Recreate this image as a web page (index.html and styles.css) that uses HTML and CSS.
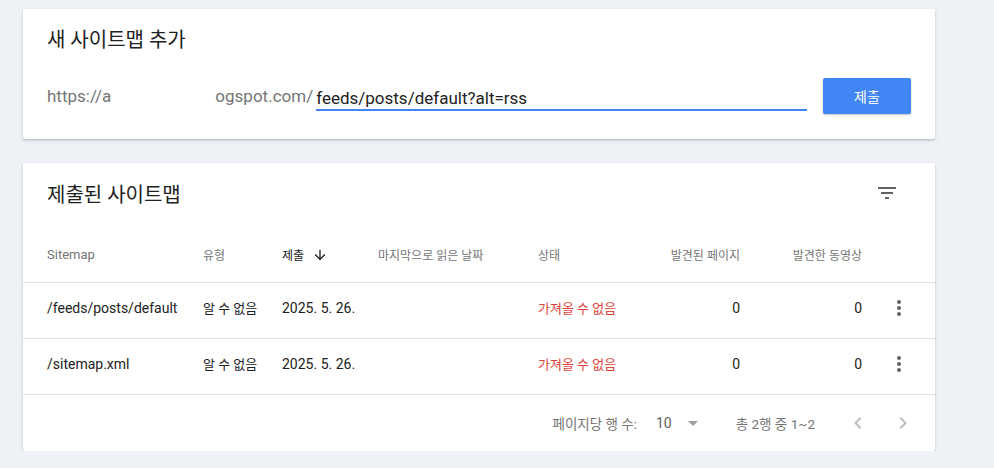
FILE: index.html
```html
<!DOCTYPE html>
<html lang="ko">
<head>
  <meta charset="UTF-8" />
  <title>Sitemaps</title>
  <link rel="stylesheet" href="styles.css">
</head>
<body>
  <div class="card add-card">
    <h2 class="card-title">새 사이트맵 추가</h2>
    <div class="add-row">
      <span class="prefix">https://a</span>
      <span class="prefix-gap"></span>
      <span class="prefix">ogspot.com/</span>
      <div class="url-field">feeds/posts/default?alt=rss</div>
      <button class="submit-btn">제출</button>
    </div>
  </div>

  <div class="card list-card">
    <div class="list-head">
      <h2 class="card-title">제출된 사이트맵</h2>
      <svg class="icon filter-icon" viewBox="0 0 24 24"><path d="M10 18h4v-2h-4v2zM3 6v2h18V6H3zm3 7h12v-2H6v2z"/></svg>
    </div>

    <div class="row header-row">
      <div class="latin">Sitemap</div>
      <div>유형</div>
      <div class="sorted">제출
        <svg class="sort-icon" viewBox="0 0 24 24"><path d="M20 12l-1.41-1.41L13 16.17V4h-2v12.17l-5.58-5.59L4 12l8 8 8-8z"/></svg>
      </div>
      <div>마지막으로 읽은 날짜</div>
      <div>상태</div>
      <div class="num">발견된 페이지</div>
      <div class="num">발견한 동영상</div>
      <div></div>
    </div>

    <div class="row data-row">
      <div class="latin">/feeds/posts/default</div>
      <div>알 수 없음</div>
      <div class="latin">2025. 5. 26.</div>
      <div></div>
      <div class="error">가져올 수 없음</div>
      <div class="num latin">0</div>
      <div class="num latin">0</div>
      <div class="more"><svg class="icon" viewBox="0 0 24 24"><path d="M12 8c1.1 0 2-.9 2-2s-.9-2-2-2-2 .9-2 2 .9 2 2 2zm0 2c-1.1 0-2 .9-2 2s.9 2 2 2 2-.9 2-2-.9-2-2-2zm0 6c-1.1 0-2 .9-2 2s.9 2 2 2 2-.9 2-2-.9-2-2-2z"/></svg></div>
    </div>

    <div class="row data-row">
      <div class="latin">/sitemap.xml</div>
      <div>알 수 없음</div>
      <div class="latin">2025. 5. 26.</div>
      <div></div>
      <div class="error">가져올 수 없음</div>
      <div class="num latin">0</div>
      <div class="num latin">0</div>
      <div class="more"><svg class="icon" viewBox="0 0 24 24"><path d="M12 8c1.1 0 2-.9 2-2s-.9-2-2-2-2 .9-2 2 .9 2 2 2zm0 2c-1.1 0-2 .9-2 2s.9 2 2 2 2-.9 2-2-.9-2-2-2zm0 6c-1.1 0-2 .9-2 2s.9 2 2 2 2-.9 2-2-.9-2-2-2z"/></svg></div>
    </div>

    <div class="pager">
      <span class="pager-label">페이지당 행 수:</span>
      <span class="page-size">10</span>
      <svg class="drop-icon" viewBox="0 0 24 24"><path d="M7 10l5 5 5-5z"/></svg>
      <span class="pager-range">총 2행 중 1~2</span>
      <svg class="chev chev-prev" viewBox="0 0 24 24"><path d="M15.41 7.41L14 6l-6 6 6 6 1.41-1.41L10.83 12z"/></svg>
      <svg class="chev" viewBox="0 0 24 24"><path d="M8.59 16.59L10 18l6-6-6-6-1.41 1.41L13.17 12z"/></svg>
    </div>
  </div>
</body>
</html>
```

FILE: styles.css
```css
body {
  margin: 0;
  padding: 9px 59px 0 23px;
  background: #eef1f6;
  font-family: Roboto, "Noto Sans CJK KR", sans-serif;
  color: #212121;
}

.card {
  background: #ffffff;
  border-radius: 2px;
  box-shadow: 0 1px 2px rgba(0,0,0,0.18), 0 2px 4px rgba(0,0,0,0.08);
}

.card-title {
  margin: 0;
  font-size: 20px;
  font-weight: 400;
  line-height: 28px;
  color: #212121;
}

/* add sitemap */
.add-card {
  height: 130px;
  box-sizing: border-box;
  padding: 17px 24px 0 24px;
}

.add-row {
  display: flex;
  align-items: center;
  margin-top: 24px;
  height: 36px;
}

.prefix {
  font-size: 17px;
  color: #757575;
}

.prefix-gap {
  width: 104px;
}

.url-field {
  flex: 1;
  margin-left: 3px;
  font-size: 17px;
  color: #212121;
  line-height: 22px;
  padding-top: 2px;
  border-bottom: 2px solid #4285f4;
  margin-top: 4px;
}

.submit-btn {
  margin-left: 16px;
  width: 88px;
  height: 36px;
  border: none;
  border-radius: 2px;
  background: #4285f4;
  color: #ffffff;
  font-family: Roboto, "Noto Sans CJK KR", sans-serif;
  font-size: 14px;
  box-shadow: 0 1px 2px rgba(0,0,0,0.25);
}

/* submitted sitemaps */
.list-card {
  margin-top: 24px;
}

.list-head {
  height: 64px;
  display: flex;
  align-items: center;
  justify-content: space-between;
  padding: 0 36px 0 24px;
}

.icon {
  width: 24px;
  height: 24px;
  fill: #5f6368;
}

.filter-icon {
  margin-top: -4px;
}

.row {
  display: grid;
  grid-template-columns: 156px 79px 96px 160px 82px 120px 122px 1fr;
  align-items: center;
  padding: 0 24px;
  border-bottom: 1px solid #e0e0e0;
  box-sizing: border-box;
  height: 56px;
  font-size: 13px;
  white-space: nowrap;
}

.data-row {
  padding-bottom: 6px;
}

.data-row .latin {
  font-size: 14px;
}

.header-row {
  font-size: 12px;
  color: #757575;
}

.header-row .latin {
  font-size: 13px;
}

.sorted {
  color: #212121;
  display: flex;
  align-items: center;
}

.sort-icon {
  width: 16px;
  height: 16px;
  margin-left: 8px;
  fill: #212121;
}

.num {
  text-align: right;
}

.error {
  color: #e0453a;
}

.more {
  display: flex;
  justify-content: flex-end;
}

.pager {
  height: 56px;
  display: flex;
  align-items: center;
  justify-content: flex-end;
  padding-right: 20px;
  font-size: 13.5px;
  color: #757575;
}

.page-size {
  margin-left: 19px;
  font-size: 14px;
  color: #616161;
}

.drop-icon {
  width: 24px;
  height: 24px;
  margin-left: 9px;
  fill: #9e9e9e;
}

.pager-range {
  margin-left: 31px;
}

.chev {
  width: 24px;
  height: 24px;
  fill: #bdbdbd;
  margin-left: 21px;
}

.chev-prev {
  margin-left: 31px;
}
```
